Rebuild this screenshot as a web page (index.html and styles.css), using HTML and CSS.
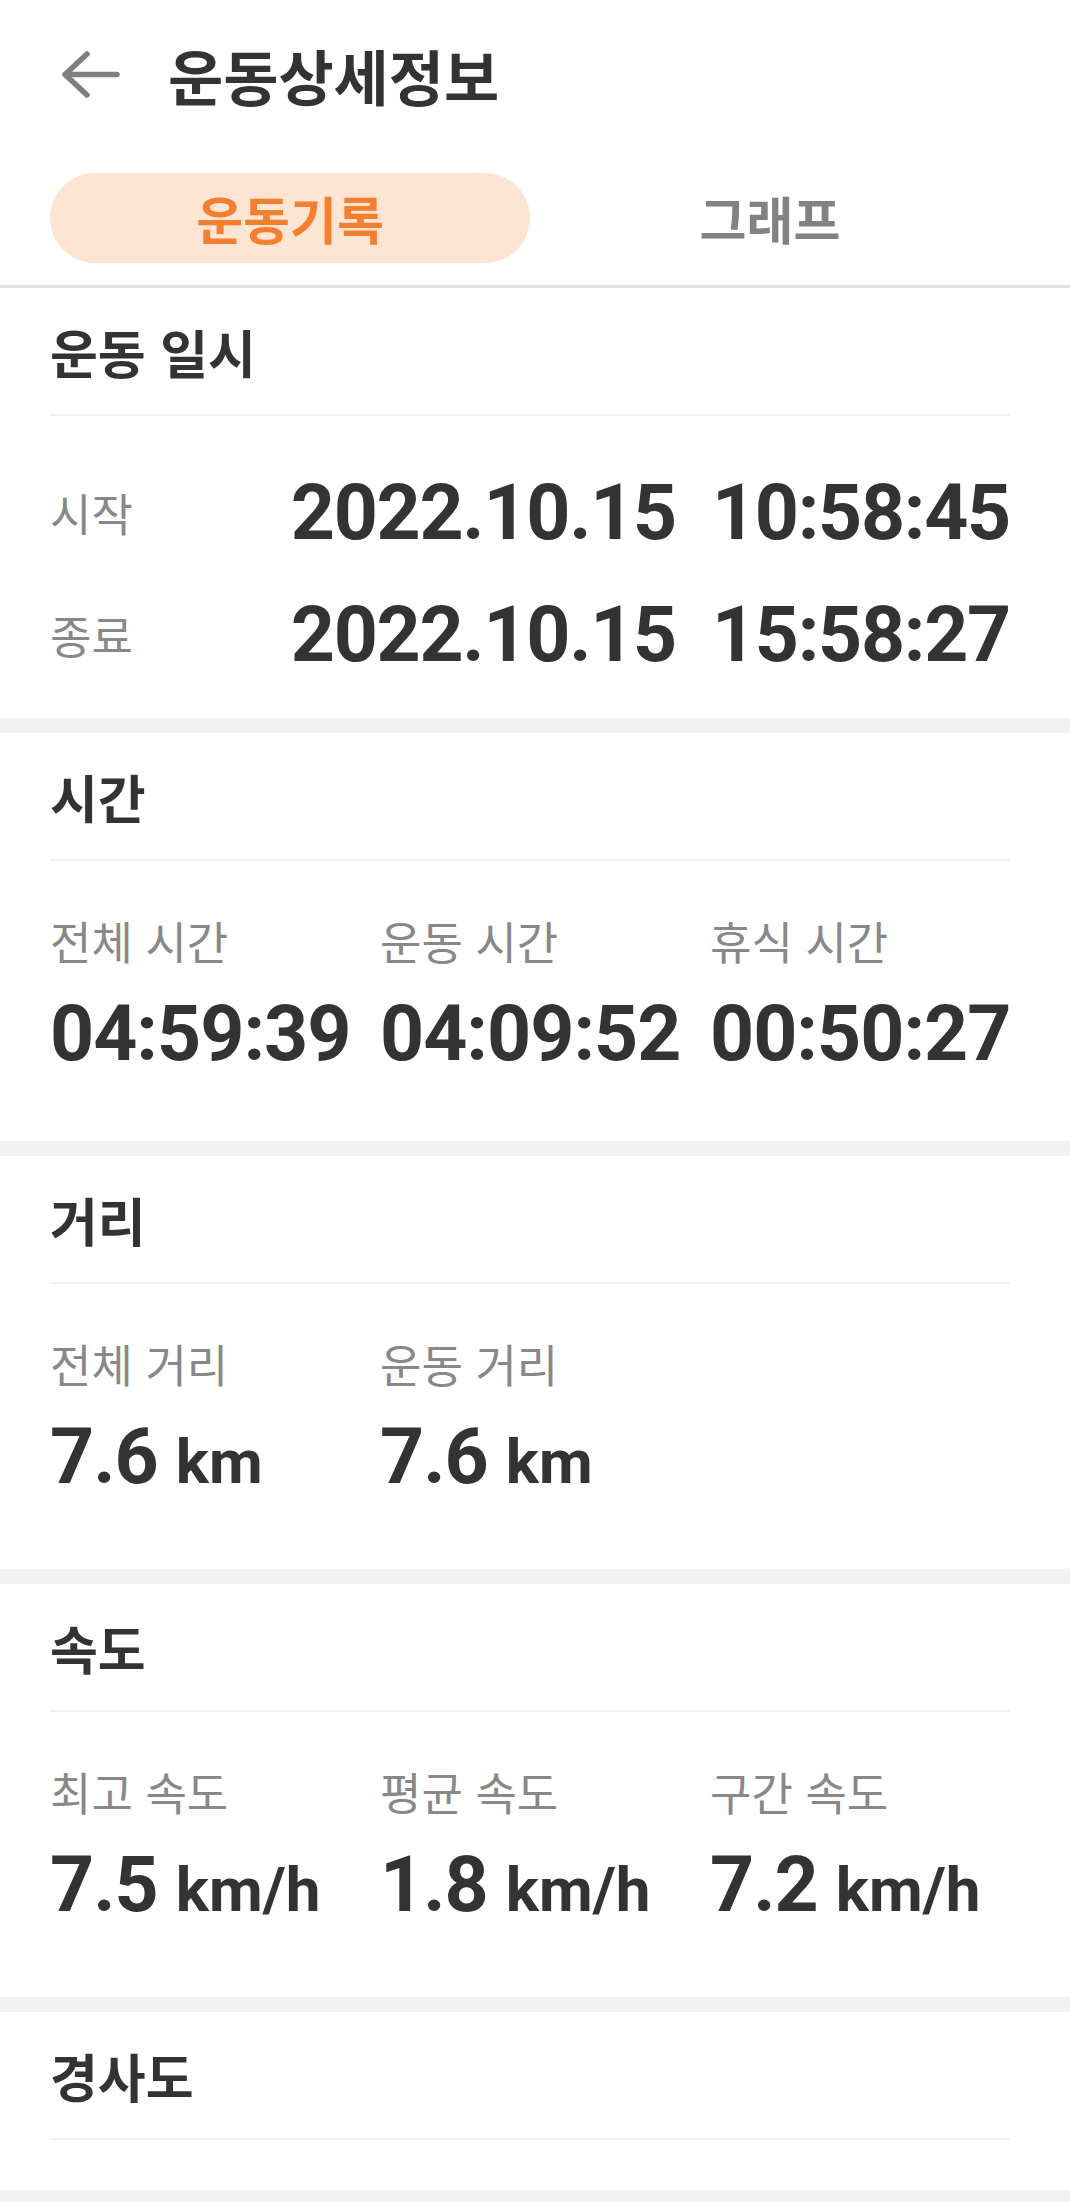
FILE: index.html
```html
<!DOCTYPE html>
<html lang="ko">
  <head>
    <meta charset="UTF-8" />
    <meta name="viewport" content="width=device-width, initial-scale=1.0" />
    <title>운동상세정보</title>
    <link rel="stylesheet" href="styles.css">
  </head>
  <body>
    <header class="topbar">
      <button class="back-btn" aria-label="뒤로">
        <svg width="60" height="50" viewBox="0 0 60 50">
          <path d="M5 24.5 H57 M27 4 L5 24.5 L27 45" fill="none" stroke="#7f7f7f" stroke-width="5.5" stroke-linecap="round" stroke-linejoin="round" />
        </svg>
      </button>
      <h1 class="page-title">운동상세정보</h1>
    </header>

    <nav class="tabs">
      <a class="tab active">운동기록</a>
      <a class="tab">그래프</a>
    </nav>

    <main>
      <section class="card">
        <h2 class="card-title">운동 일시</h2>
        <div class="period">
          <div class="period-row">
            <span class="label">시작</span>
            <span class="value"><span>2022.10.15</span><span>10:58:45</span></span>
          </div>
          <div class="period-row">
            <span class="label">종료</span>
            <span class="value"><span>2022.10.15</span><span>15:58:27</span></span>
          </div>
        </div>
      </section>

      <section class="card">
        <h2 class="card-title">시간</h2>
        <div class="stats">
          <div class="stat">
            <span class="label">전체 시간</span>
            <span class="value">04:59:39</span>
          </div>
          <div class="stat">
            <span class="label">운동 시간</span>
            <span class="value">04:09:52</span>
          </div>
          <div class="stat">
            <span class="label">휴식 시간</span>
            <span class="value">00:50:27</span>
          </div>
        </div>
      </section>

      <section class="card">
        <h2 class="card-title">거리</h2>
        <div class="stats">
          <div class="stat">
            <span class="label">전체 거리</span>
            <span class="value">7.6 <span class="unit">km</span></span>
          </div>
          <div class="stat">
            <span class="label">운동 거리</span>
            <span class="value">7.6 <span class="unit">km</span></span>
          </div>
        </div>
      </section>

      <section class="card">
        <h2 class="card-title">속도</h2>
        <div class="stats">
          <div class="stat">
            <span class="label">최고 속도</span>
            <span class="value">7.5 <span class="unit">km/h</span></span>
          </div>
          <div class="stat">
            <span class="label">평균 속도</span>
            <span class="value">1.8 <span class="unit">km/h</span></span>
          </div>
          <div class="stat">
            <span class="label">구간 속도</span>
            <span class="value">7.2 <span class="unit">km/h</span></span>
          </div>
        </div>
      </section>

      <section class="card card-last">
        <h2 class="card-title">경사도</h2>
      </section>
    </main>
  </body>
</html>
```

FILE: styles.css
```css
body {
  margin: 0;
  background-color: #f1f2f4;
  font-family: "Noto Sans CJK KR", "Noto Sans", sans-serif;
  color: #333333;
}

/* top bar */
.topbar {
  display: flex;
  align-items: center;
  height: 150px;
  padding-left: 60px;
  background-color: #ffffff;
}
.back-btn {
  display: flex;
  padding: 0;
  border: none;
  background: none;
}
.page-title {
  margin: 0 0 0 48px;
  font-size: 60px;
  font-weight: 700;
  line-height: 1;
  color: #333333;
}

/* tabs */
.tabs {
  display: grid;
  grid-template-columns: 1fr 1fr;
  padding: 23px 60px 22px 50px;
  background-color: #ffffff;
  border-bottom: 3px solid #e2e2e2;
}
.tab {
  height: 90px;
  line-height: 90px;
  border-radius: 45px;
  text-align: center;
  font-size: 51px;
  font-weight: 700;
  color: #828282;
}
.tab.active {
  background-color: #fde4d3;
  color: #f47f2e;
}

/* cards */
.card {
  margin-bottom: 15px;
  padding: 0 60px 0 50px;
  background-color: #ffffff;
}
.card-last {
  margin-bottom: 0;
  padding-bottom: 50px;
}
.card-title {
  display: flex;
  align-items: center;
  height: 126px;
  margin: 0;
  font-size: 52px;
  font-weight: 700;
  border-bottom: 2px solid #f0f0f0;
}

.label {
  font-size: 45px;
  line-height: 60px;
  color: #888888;
}
.value {
  font-family: Roboto, "Noto Sans CJK KR", sans-serif;
  font-size: 77px;
  font-weight: 700;
  line-height: 80px;
  letter-spacing: -1px;
  color: #333333;
  white-space: nowrap;
}
.unit {
  font-size: 62px;
  letter-spacing: 0;
}

/* start / end rows */
.period {
  padding: 36px 0 22px;
}
.period-row {
  display: flex;
  align-items: center;
  justify-content: space-between;
  height: 122px;
}
.period-row .value {
  display: flex;
  gap: 36px;
  letter-spacing: -1.3px;
}

/* three column stats */
.stats {
  display: grid;
  grid-template-columns: 330px 330px 1fr;
  padding: 50px 0 67px;
}
.stat {
  display: flex;
  flex-direction: column;
  gap: 23px;
}
```
